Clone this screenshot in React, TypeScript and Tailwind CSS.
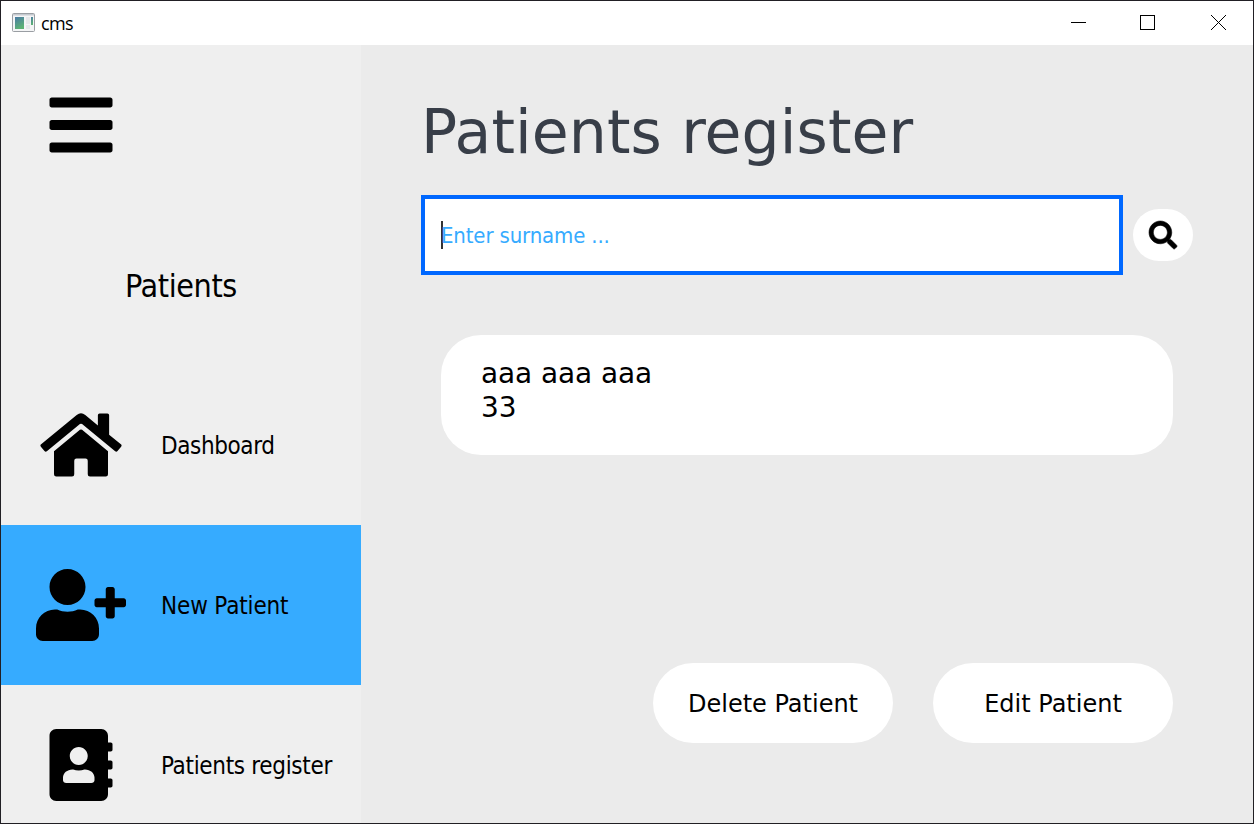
import { FaBars, FaHome, FaUserPlus, FaAddressBook, FaSearch } from "react-icons/fa";
import type { IconType } from "react-icons";

type NavItem = { label: string; icon: IconType; active?: boolean; iconSize: string; text: string };

const navItems: NavItem[] = [
  { label: "Dashboard", icon: FaHome, iconSize: "h-[72px] w-[82px]", text: "tracking-[-0.4px]" },
  { label: "New Patient", icon: FaUserPlus, active: true, iconSize: "h-[72px] w-[90px]", text: "tracking-[-0.15px]" },
  { label: "Patients register", icon: FaAddressBook, iconSize: "h-[72px] w-16", text: "tracking-[-0.32px]" },
];

function TitleBar() {
  return (
    <header className="flex h-11 shrink-0 items-center bg-white">
      <svg className="mb-0.5 ml-[11px] h-[19px] w-[23px] shrink-0" viewBox="0 0 23 19">
        <defs>
          <linearGradient id="pane" x1="0" y1="0" x2="0.4" y2="1">
            <stop offset="0" stopColor="#4a7aa6" />
            <stop offset="1" stopColor="#5cb274" />
          </linearGradient>
        </defs>
        <rect x="0.5" y="0.5" width="22" height="18" rx="1" fill="#f4f5f6" stroke="#9a9ea3" />
        <rect x="1" y="1" width="21" height="1.5" fill="#c5cad0" />
        <rect x="3" y="4" width="9" height="12" fill="url(#pane)" />
        <rect x="14" y="4" width="4" height="7" fill="#e6e8ea" />
        <rect x="14" y="12" width="4" height="4" fill="#e6e8ea" />
        <rect x="19" y="4" width="2" height="8" fill="url(#pane)" />
      </svg>
      <span className="mb-px ml-1.5 flex-1 font-['Open_Sans','Noto_Sans',sans-serif] text-[18px] leading-6 tracking-[-0.6px] text-black">cms</span>
      <div className="mb-0.5 flex shrink-0 items-center">
        <svg className="mr-[54px] h-[15px] w-[15px]" viewBox="0 0 15 15">
          <path d="M0 7.5h15" stroke="#000" />
        </svg>
        <svg className="mr-14 h-[15px] w-[15px]" viewBox="0 0 15 15">
          <rect x="0.5" y="0.5" width="14" height="14" fill="none" stroke="#000" />
        </svg>
        <svg className="mr-[27px] h-[15px] w-[15px]" viewBox="0 0 15 15">
          <path d="M0 0l15 15M15 0L0 15" stroke="#000" />
        </svg>
      </div>
    </header>
  );
}

function Sidebar() {
  return (
    <nav className="flex w-[360px] shrink-0 flex-col overflow-hidden bg-[#efefef] font-['DejaVu_Sans_Condensed','DejaVu_Sans',sans-serif] font-stretch-condensed text-black">
      <div className="flex h-40 w-40 shrink-0 items-center justify-center">
        <FaBars className="h-[72px] w-16" />
      </div>
      <div className="flex h-40 shrink-0 items-center justify-center pt-0.5 text-[32px] tracking-[-0.4px]">Patients</div>
      {navItems.map(({ label, icon: Icon, active, iconSize, text }) => (
        <a key={label} className={`flex h-40 shrink-0 items-center ${active ? "bg-[#36abff]" : ""}`}>
          <span className="flex w-40 shrink-0 items-center justify-center">
            <Icon className={iconSize} />
          </span>
          <span className={`whitespace-nowrap pt-0.5 text-[24px] ${text}`}>{label}</span>
        </a>
      ))}
    </nav>
  );
}

export default function App() {
  return (
    <div className="flex h-[824px] w-[1254px] flex-col overflow-hidden border border-[#211f24] bg-[#ebebeb]">
      <TitleBar />
      <div className="flex min-h-0 flex-1">
        <Sidebar />
        <main className="flex flex-1 flex-col pl-[60px] pr-[60px] pt-[49px] font-['DejaVu_Sans',sans-serif] text-black">
          <h1 className="h-[101px] whitespace-nowrap text-[60px] leading-[76px] tracking-[0.1px] text-[#383e48]">Patients register</h1>
          <div className="flex items-center gap-2.5">
            <div className="flex h-20 w-[702px] items-center border-4 border-[#0068ff] bg-white pl-4">
              <span className="h-7 w-0.5 bg-[#333]" />
              <span className="-ml-0.5 font-['DejaVu_Sans_Condensed','DejaVu_Sans',sans-serif] font-stretch-condensed text-[22px] tracking-[-0.15px] text-[#36abff]">Enter surname ...</span>
            </div>
            <button className="flex h-[52px] w-[60px] items-center justify-center rounded-full bg-white">
              <FaSearch className="h-7 w-7 overflow-visible stroke-black stroke-[10px]" />
            </button>
          </div>
          <div className="ml-5 mt-[60px] h-[120px] w-[732px] rounded-[40px] bg-white pl-10 pt-[22px] text-[28px] leading-[34px] tracking-[-0.1px]">
            <p>aaa aaa aaa</p>
            <p>33</p>
          </div>
          <div className="mr-5 mt-[208px] flex justify-end gap-10 text-[24px]">
            <button className="h-20 w-60 rounded-[40px] bg-white pt-0.5">Delete Patient</button>
            <button className="h-20 w-60 rounded-[40px] bg-white pt-0.5">Edit Patient</button>
          </div>
        </main>
      </div>
    </div>
  );
}
